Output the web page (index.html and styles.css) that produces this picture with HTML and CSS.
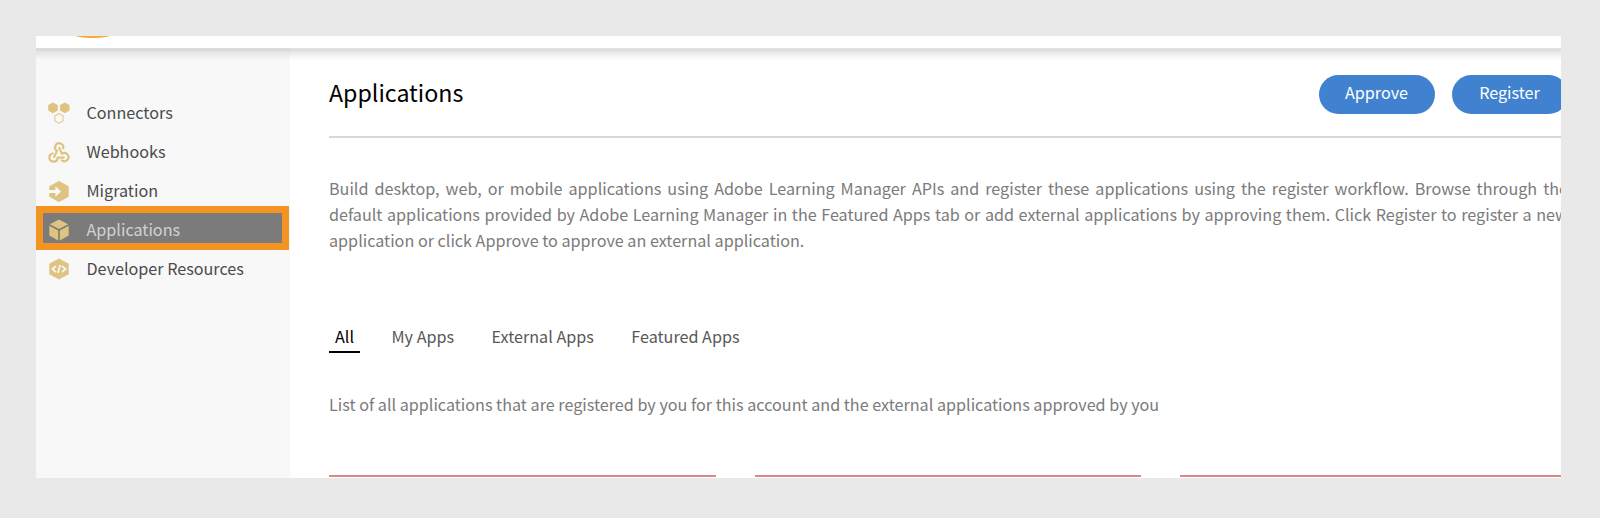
FILE: index.html
```html
<!DOCTYPE html>
<html lang="en">
<head>
<meta charset="utf-8">
<title>Applications</title>
<link rel="stylesheet" href="styles.css">
</head>
<body>
<div class="window">
  <header class="topbar">
    <svg class="brand" width="64" height="12" viewBox="0 0 64 12"><ellipse cx="32.500" cy="-16" rx="38" ry="18" fill="#fba733"/></svg>
  </header>
  <div class="body">
    <nav class="sidebar">
      <a class="nav-item">
        <svg class="icon" viewBox="0 0 22 22"><path fill="#dfc481" d="M5 .4l4.800 2.700v5.400L5 11.200.2 8.500V3.100zM16.800.4l4.800 2.700v5.400l-4.800 2.700L12 8.500V3.100z"/><path fill="none" stroke="#e6d2a0" stroke-width="1.300" d="M11 11.600l4.200 2.400v4.800L11 21.200l-4.200-2.400V14z"/></svg>
        <span>Connectors</span>
      </a>
      <a class="nav-item">
        <svg class="icon" viewBox="0 -.5 22 22"><g fill="none" stroke="#dfc481" stroke-width="2.200" stroke-linecap="round" stroke-linejoin="round"><path d="M15.200 6.700A4.100 4.100 0 1 0 9 9.400L6.100 15.600"/><path d="M4.600 12A4.100 4.100 0 1 0 9.600 16.100H15.800"/><path d="M11.300 6.500L14 12.300A4.100 4.100 0 1 1 13.800 18.900"/></g></svg>
        <span>Webhooks</span>
      </a>
      <a class="nav-item">
        <svg class="icon" viewBox="0 -.5 22 22"><path fill="#dfc481" d="M11 .4l9.700 5.300v10.600L11 21.600 1.300 16.300V5.700z"/><path fill="#f8f8f8" d="M0 9.500h7.400V5.800l5.700 5.200-5.700 5.200v-3.700H0z"/></svg>
        <span>Migration</span>
      </a>
      <a class="nav-item nav-item--active">
        <svg class="icon" viewBox="0 0 22 22"><path fill="#dfc481" d="M11 .5l9.200 4.700L11 10 1.800 5.200zM1.300 6.800l8.900 4.600v10L1.300 16.500zM20.700 6.800l-8.900 4.600v10l8.900-4.900z"/></svg>
        <span>Applications</span>
      </a>
      <a class="nav-item">
        <svg class="icon" viewBox="0 0 22 22"><path fill="#dfc481" d="M11 .4l9.700 5.300v10.600L11 21.600 1.300 16.300V5.700z"/><path fill="none" stroke="#f8f8f8" stroke-width="1.700" d="M8 7.800L4.400 11 8 14.200M14 7.800l3.600 3.200-3.600 3.200M12.200 7l-2.400 8"/></svg>
        <span>Developer Resources</span>
      </a>
    </nav>
    <main class="content">
      <div class="heading">
        <h1 class="title">Applications</h1>
        <div class="actions">
          <button class="button">Approve</button>
          <button class="button">Register</button>
        </div>
      </div>
      <p class="intro">Build desktop, web, or mobile applications using Adobe Learning Manager APIs and register these applications using the register workflow. Browse through the default applications provided by Adobe Learning Manager in the Featured Apps tab or add external applications by approving them. Click Register to register a new application or click Approve to approve an external application.</p>
      <div class="tabs">
        <a class="tab tab--active">All</a>
        <a class="tab">My Apps</a>
        <a class="tab">External Apps</a>
        <a class="tab">Featured Apps</a>
      </div>
      <p class="summary">List of all applications that are registered by you for this account and the external applications approved by you</p>
      <div class="cards">
        <div class="card"></div>
        <div class="card"></div>
        <div class="card"></div>
      </div>
    </main>
  </div>
</div>
</body>
</html>
```
FILE: styles.css
```css
* { box-sizing: border-box; }

body {
  margin: 0;
  height: 518px;
  padding: 36px 39px 40px 36px;
  overflow: hidden;
  background: #e9e9e9;
  font-family: "Noto Sans CJK SC", "Open Sans", sans-serif;
  font-size: 16.160px;
}

.window {
  display: flex;
  flex-direction: column;
  width: 1525px;
  height: 442px;
  overflow: hidden;
  background: #fff;
}

.topbar {
  flex: none;
  height: 12px;
  padding-left: 24px;
  background: #fff;
}

.brand { display: block; }

.body {
  flex: 1;
  display: flex;
  min-height: 0;
  background: linear-gradient(#e2e2e2 1px, #dadada 1px, #e8e8e8 4px, rgba(255, 255, 255, 0) 12px);
}

.sidebar {
  flex: none;
  width: 254px;
  padding-top: 45px;
  background: linear-gradient(#dedede 1px, #d4d4d4 1px, #e4e4e4 4px, #f8f8f8 12px);
}

.nav-item {
  display: flex;
  align-items: center;
  gap: 16.500px;
  height: 39px;
  padding-left: 12px;
  color: #4b4b4b;
  line-height: 24px;
}

.nav-item span { padding-bottom: 1px; }

.nav-item--active {
  width: 253px;
  height: 44px;
  margin: -4px 0 0;
  padding: 3px 0 0 5px;
  border: 7px solid #f39422;
  background: #7b7b7b;
  color: #d2d2d2;
}

.nav-item--active + .nav-item { margin-top: -1px; }

.nav-item--active + .nav-item span { padding-bottom: 2px; }

.icon {
  flex: none;
  width: 22px;
  height: 22px;
}

.content {
  flex: none;
  width: 1317px;
  padding: 26px 39px 0 39px;
}

.heading {
  display: flex;
  justify-content: space-between;
  height: 64px;
  border-bottom: 2px solid #d8d8d8;
}

.title {
  margin: 0;
  color: #000;
  font-size: 23.200px;
  font-weight: 400;
  line-height: 36px;
}

.actions {
  display: flex;
  gap: 17px;
}

.button {
  width: 116px;
  height: 39.500px;
  margin-top: .5px;
  padding: 0 1px 4px 0;
  border: 0;
  border-radius: 20px;
  background: #4082d0;
  color: #fff;
  font: inherit;
  line-height: 35px;
}

.intro {
  margin: 37px 0 0;
  color: #7b7b7b;
  line-height: 26px;
  text-align: justify;
}

.tabs {
  display: flex;
  margin-top: 70px;
  gap: 25.500px;
}

.tab {
  height: 30px;
  padding: 0 6px;
  color: #585858;
  line-height: 26px;
}

.tab--active {
  border-bottom: 2px solid #000;
  color: #000;
}

.summary {
  margin: 38px 0 0;
  color: #7b7b7b;
  line-height: 26px;
}

.cards {
  display: grid;
  grid-template-columns: repeat(3, 386.500px);
  gap: 39px;
  margin-top: 58px;
}

.card {
  height: 120px;
  border-top: 2px solid #d98a84;
  background: #fff;
}
```
